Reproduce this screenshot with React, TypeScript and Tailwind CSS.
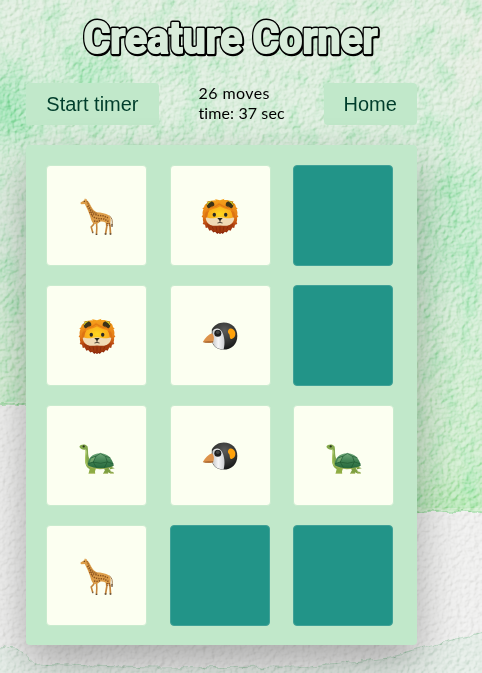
import React from "react";

type Creature = "giraffe" | "lion" | "penguin" | "turtle";

const cards: (Creature | null)[] = [
  "giraffe", "lion", null,
  "lion", "penguin", null,
  "turtle", "penguin", "turtle",
  "giraffe", null, null,
];

function Giraffe() {
  return (
    <svg viewBox="0 0 36 36" className="h-9 w-9 overflow-visible">
      <g fill="none" strokeLinecap="round">
        <path d="M15.5 24l-1 2.5-2.3 2.5 1.4 5M17.5 24l.3 6-.3 6" stroke="#c4843a" strokeWidth="1.6" />
        <path d="M27.5 23l.3 5.5-1.2 7.2M30 22l1 6 .5 7.6" stroke="#c4843a" strokeWidth="1.7" />
        <path d="M30.6 18c2.4 1.6 3.2 4.5 2.5 9" stroke="#8a5b28" strokeWidth=".8" />
        <path d="M33 26.5v2" stroke="#4c3421" strokeWidth="1.1" />
      </g>
      <path d="M1.6 4.6l3.6-2.4.8-2 .9 1.2.6-.6.5 1.6c2 .9 3 3.600 4.200 6 1.300 2.500 3.200 4.600 5.600 5.800 4.400.4 9 1 11.900 3 2.300 1.800 2.500 5.600 1.300 8-1 .9-2.600.7-3.700-.2-1.800-1.200-3.900-1.300-6.200-1.500-1.400 1.900-3.600 2.900-5.600 2.300-2.600-.8-3.300-4-4.400-7.500C10 14.300 7.600 9.500 5.800 5.900L2.500 6.200c-.8 0-1.300-.8-.9-1.600z" fill="#dc9d49" />
      <path d="M7.800 3.200c2 3 2.600 7 5.200 9.500 1.600 1.600 3.600 2.300 5.500 3" fill="none" stroke="#9d6427" strokeWidth="1.300" strokeDasharray="1.500 .6" />
      <path d="M8.500 8l2.500 4.200 3 3.600 5 1.700 5 .3 5 2M13 17.500l3 2.500 4.500.7 4.500.3 4.500 2.500M10.500 14l2.500 3M15 23l2.500.5 4-.8M28.300 25l.2 3M30 25l.7 3" fill="none" stroke="#8d541f" strokeWidth="1.500" strokeDasharray="1.400 1" />
      <circle cx="5.300" cy="3.300" r=".6" fill="#452b12" />
      <path d="M13.300 34.500h1M16.700 36.300h1.600M25.700 36h1.700M30.700 36h1.600" stroke="#58483b" strokeWidth="1.300" />
    </svg>
  );
}

function Lion() {
  return (
    <svg viewBox="0 0 36 36" className="h-9 w-9 overflow-visible">
      <defs>
        <linearGradient id="mane" x2="0" y2="1">
          <stop stopColor="#f7a31c" />
          <stop offset=".5" stopColor="#e47c18" />
          <stop offset=".7" stopColor="#bd4c12" />
          <stop offset="1" stopColor="#83200a" />
        </linearGradient>
        <radialGradient id="lionFace" cx=".5" cy=".45" r=".6">
          <stop stopColor="#ffd81f" />
          <stop offset="1" stopColor="#f99f1b" />
        </radialGradient>
      </defs>
      <path d="M7 4.500L4.300 3.300c3.500.2 6-1.400 10-1L12.500 1l5.500 1.200L22.500.8l-.7 1.300c3.500-.6 5.700.4 7.500 1.100l2.400-.2-1.200 1.600c2.300.9 3.300 2.500 3.500 4.700l1.700 1.100-1.200.9c1 2 1.200 4 .7 5.800l1.200 1.500-1.400 1.200c.3 1.500.1 3-.4 4.300l.7 2-2.300.7-.8 3.200-1.900-.4-1.700 3.100-1.800-.7-2.200 2.500-1.700-.7L20.700 36l-1-1-1.700 1-1.700-1-1 1-2.200-2.200-1.700.7-2.200-2.500-1.800.7-1.700-3.100-1.900.4-.8-3.200-2.300-.7.700-2C.9 22.800.7 21.300 1 19.800L-.4 18.600l1.200-1.500C.3 15.300.5 13.300 1.500 11.300l-1.200-.9L2 9.300C2.200 7.100 4 5.300 7 4.500z" fill="url(#mane)" />
      <ellipse cx="8.500" cy="7" rx="3.800" ry="3.700" fill="#3d3318" />
      <ellipse cx="27.500" cy="7" rx="3.800" ry="3.700" fill="#3d3318" />
      <path d="M4.900 7.500a3.800 3.800 0 0 1 4.600-4.100q-2.800 1-4.600 4.100zM31.100 7.500a3.800 3.800 0 0 0-4.600-4.100q2.800 1 4.600 4.100z" fill="#f4e321" />
      <path d="M18 7C10.500 7 5.200 12.500 5.200 18.500c0 5.500 5.600 9 12.800 9s12.800-3.500 12.800-9C30.800 12.500 25.500 7 18 7z" fill="url(#lionFace)" />
      <path d="M3.800 18.500c4.800 3.700 10.400.7 14.200.7s9.400 3 14.200-.7c.6 6.500-5 10.500-14.200 10.500S3.200 25 3.800 18.500z" fill="#f0dab5" />
      <path d="M2.800 20C2.500 13 6.500 9.500 13.500 6.500 9 8.500 6 13 5 19.500zM33.200 20c.3-7-3.700-10.500-10.700-13.500 4.500 2 7.500 6.500 8.500 13z" fill="#dc7313" />
      <path d="M4 14.500C6.500 9.500 12 8.800 17 4.500c4 3.700 11.500 3.500 15 10-4-4-9.500-3-14-6.300-4.500 3.200-10 2.300-14 6.300z" fill="#ef8c16" />
      <path d="M10 9.500q4-.5 7-3.500 5 3 9 4" fill="none" stroke="#d56e10" strokeWidth=".6" />
      <ellipse cx="12.300" cy="16.800" rx="1.700" ry="2" fill="#292826" />
      <ellipse cx="23.700" cy="16.800" rx="1.700" ry="2" fill="#292826" />
      <path d="M15.300 20h5.400L18 22.900z" fill="#20201e" />
      <path d="M18 22v2.300M15.500 25q2.500-1.100 5 0" fill="none" stroke="#40342a" strokeWidth=".9" />
      <path d="M4.500 25c5.500 4.300 9 2.500 13.500 2.500s8 1.800 13.500-2.500l-1.300 3.500-2.500 2-2.200 2-2.500 1.500-2.500-.5-2.500 1.500-2.500-1.500-2.500.5-2.500-1.500-2.200-2-2.500-2z" fill="#a03a0e" />
      <path d="M10 28.500l1.500 3M14 28.500l.8 4M18 28.500v5M22 28.500l-.8 4M26 28.500l-1.500 3" stroke="#7d200a" strokeWidth=".6" />
    </svg>
  );
}

function Penguin() {
  return (
    <svg viewBox="0 0 36 36" className="h-9 w-9">
      <defs>
        <radialGradient id="penguinHead" cx=".5" cy=".3" r=".7">
          <stop stopColor="#5c5c5b" />
          <stop offset=".55" stopColor="#363736" />
          <stop offset="1" stopColor="#171818" />
        </radialGradient>
        <linearGradient id="cheek">
          <stop stopColor="#c4c5c6" />
          <stop offset=".5" stopColor="#f5f5f6" />
          <stop offset="1" stopColor="#cecfd1" />
        </linearGradient>
      </defs>
      <path d="M9.800 11.500C12 7.300 16.500 4.500 21.800 4.500c8 0 13.500 5.500 13.500 13.400 0 8.300-5.800 13.700-14 13.700-6.300 0-10.300-3.600-11.500-8.900z" fill="url(#penguinHead)" />
      <path d="M10.500 13c3.500-4.200 7.900-2.400 9.500.8 2.400 4.500 3.400 11.400 1.600 17.600-5.600.3-10.300-3.200-11.500-8.200z" fill="url(#cheek)" />
      <path d="M.8 24c2.500-4.500 5.500-7.500 9.200-8.800 2.200 2.400 2.600 5.700.9 9.100-3.500.8-6.900.7-10.100-.3z" fill="#dd924b" />
      <path d="M.8 24c4-.9 6.500-.7 10.600-1.100l-.5 1.400c-3.800.9-7 .7-10.100-.3z" fill="#a7662f" />
      <circle cx="15.800" cy="15.200" r="3.500" fill="#1d1e1e" />
      <circle cx="15.800" cy="14.300" r="1.800" fill="#444544" />
      <path d="M26.400 12c1.500-2.700 5.500-1.700 6.700 2 .9 3.200-.5 6.200-3.500 6.900-2.500.3-1.200-3.600-2.600-5-1.200-1.200-1.400-2.400-.6-3.900z" fill="#ffa20b" />
    </svg>
  );
}

function Turtle() {
  return (
    <svg viewBox="0 -3 36 36" className="h-9 w-9 overflow-visible">
      <defs>
        <linearGradient id="turtleShell" x2="0" y2="1">
          <stop stopColor="#72aa7b" />
          <stop offset=".5" stopColor="#428354" />
          <stop offset="1" stopColor="#26683c" />
        </linearGradient>
      </defs>
      <path d="M30 25l5.800 2.200-5.900 1.300zM24 27l2 2-2 3.800h5.200l-.3-1.500 2.600 1.200h3.500l-.8-1.500-2.500-.5-1.200-3.500z" fill="#7d9f40" />
      <path d="M.4 5.700C1.300 3.200 6.700 2.400 8.600 5.600c1 4.400-.4 9.300 2.500 13.300l4 7.700-1.500 2.700c-4-.8-6.700-3.500-7.300-7.800-.4-4.700 1.800-8.500.7-12.700C4.300 8.700 1.200 8.200.4 5.700z" fill="#83a84b" />
      <path d="M6.800 9c1 5-2.300 10.500 1.800 16" fill="none" stroke="#a9c65e" strokeWidth="1.200" />
      <path d="M10.500 24l.2 4-1.200 4.800h6.700l-.2-2.500 1-3z" fill="#8dac43" />
      <path d="M8 24.600c4.700 4.700 18.500 4.400 25.600 1.200l-.6-3H9z" fill="#9bae55" />
      <path d="M8.800 24.200c-.2-7 4.500-12.100 12.600-12 7 .2 12.100 5.100 13.400 12.500-6.400 3.200-19.500 3.700-26-.5z" fill="url(#turtleShell)" />
      <path d="M11.500 17.200l5.500-2.100 4.500-2.700 5 3 4.800 1.200M17 15.100l-2.800 6-5.200 1.700M14.200 21.100l3.300 5.500M26.500 15.400l1.800 5.500-3 5.900M14.200 21.100l7.300 1.200 6.800-1.400 6.200 2" fill="none" stroke="#1d5630" strokeWidth=".65" />
      <path d="M12.500 17.300l3.700-1.400-2.200 4.500-3.300 1.200z" fill="#93bd80" opacity=".55" />
      <circle cx="4.700" cy="5.400" r="1.100" fill="#25301b" />
      <path d="M10 32.400h5.800M24.800 32.400H29M31 32.200h3.500" stroke="#c2ca82" strokeWidth=".8" />
    </svg>
  );
}

const drawings = { giraffe: Giraffe, lion: Lion, penguin: Penguin, turtle: Turtle };

function WatercolorPaper() {
  return (
    <svg className="pointer-events-none absolute inset-0 h-full w-full" viewBox="0 0 482 673" aria-hidden="true">
      <defs>
        <filter id="soft" x="-100%" y="-100%" width="300%" height="300%"><feGaussianBlur stdDeviation="18" /></filter>
        <filter id="torn" x="-5%" y="-5%" width="110%" height="110%">
          <feTurbulence type="fractalNoise" baseFrequency=".07" numOctaves="4" seed="8" />
          <feDisplacementMap in="SourceGraphic" scale="8" xChannelSelector="R" yChannelSelector="G" />
        </filter>
        <filter id="grain" x="0" y="0" width="100%" height="100%" colorInterpolationFilters="sRGB">
          <feTurbulence type="fractalNoise" baseFrequency=".22" numOctaves="2" seed="4" result="n" />
          <feColorMatrix in="n" values="0 0 0 0 0 0 0 0 0 0 0 0 0 0 0 1 0 0 0 0" result="height" />
          <feDiffuseLighting in="height" surfaceScale="2.6" lightingColor="#ffffff">
            <feDistantLight azimuth="220" elevation="45" />
          </feDiffuseLighting>
        </filter>
        <filter id="pigment" x="0" y="0" width="100%" height="100%" colorInterpolationFilters="sRGB">
          <feTurbulence type="fractalNoise" baseFrequency=".05 .035" numOctaves="4" seed="19" />
          <feColorMatrix values="0 0 0 0 .43 0 0 0 0 .86 0 0 0 0 .56 3.500 0 0 0 -1.600" />
        </filter>
        <linearGradient id="wash" x2="0" y2="1">
          <stop stopColor="#dcebdc" />
          <stop offset=".5" stopColor="#d1ebd5" />
          <stop offset="1" stopColor="#c8ebc6" />
        </linearGradient>
        <clipPath id="washArea"><path d="M0 0H482V508H422L300 460 27 402H0z" /></clipPath>
      </defs>
      <rect width="482" height="673" fill="#ececeb" />
      <path d="M-10 -10H492V511H422L300 460 30 404H-10z" fill="url(#wash)" stroke="#9bd9a0" strokeWidth="1.500" filter="url(#torn)" />
      <g clipPath="url(#washArea)">
        <g filter="url(#soft)">
          <ellipse cx="6" cy="105" rx="24" ry="32" fill="#85dda3" />
          <ellipse cx="90" cy="80" rx="20" ry="38" fill="#a5e5b8" />
          <ellipse cx="450" cy="230" rx="40" ry="60" fill="#bce8c6" />
          <ellipse cx="350" cy="25" rx="100" ry="22" fill="#dcebdb" />
          <ellipse cx="478" cy="50" rx="16" ry="75" fill="#e9ece2" />
          <ellipse cx="6" cy="230" rx="22" ry="45" fill="#d9eadb" />
          <ellipse cx="450" cy="510" rx="50" ry="14" fill="#9de29e" />
        </g>
        <rect width="482" height="520" filter="url(#pigment)" opacity=".25" />
      </g>
      <path d="M-10 647L18 649 36 664 150 668 300 667 390 658 421 649 451 640 495 631V690H-10z" fill="#dfe9e2" stroke="#b9d8c2" strokeWidth="1" filter="url(#torn)" />
      <rect width="482" height="673" filter="url(#grain)" className="mix-blend-soft-light" opacity=".75" />
    </svg>
  );
}

function Title() {
  return (
    <h1 className="h-[83px] w-full" aria-label="Creature Corner">
      <svg width="482" height="83" viewBox="0 0 482 83" style={{ fontFamily: 'Roboto, "Liberation Sans", sans-serif' }}>
        <defs>
          <text id="gameTitle" x="83.500" y="53" fontSize="45" fontWeight="700" textLength="294" lengthAdjust="spacingAndGlyphs">Creature Corner</text>
        </defs>
        <use href="#gameTitle" x=".8" y="1.400" fill="#000" stroke="#000" strokeWidth="4.600" strokeLinejoin="round" />
        <use href="#gameTitle" fill="#000" stroke="#000" strokeWidth="4.900" strokeLinejoin="round" />
        <use href="#gameTitle" fill="#d9ecdb" stroke="#d9ecdb" strokeWidth="2" strokeLinejoin="round" />
      </svg>
    </h1>
  );
}

export default function App() {
  return (
    <main className="relative isolate h-[673px] w-full overflow-hidden bg-[#dcebdc]">
      <WatercolorPaper />
      <div className="relative flex flex-col">
        <Title />
        <div className="ml-[26.3px] flex w-[390.6px] flex-col gap-5">
          <header className="flex h-[42px] items-center justify-between font-['Liberation_Sans',Arial,sans-serif]">
            <button className="h-full rounded bg-[#c1e8ca] px-5 text-xl text-[#003d2b]">Start timer</button>
            <div className="mb-[2px] w-[85px] font-[Lato,sans-serif] text-base leading-5 tracking-[0.1px] text-black">
              <p className="whitespace-nowrap tracking-[0.4px]">26 moves</p>
              <p className="whitespace-nowrap">time: 37 sec</p>
            </div>
            <button className="h-full rounded bg-[#c1e8ca] px-5 text-xl text-[#003d2b]">Home</button>
          </header>
          <section className="grid h-[500px] grid-cols-3 content-start gap-x-5 gap-y-[19px] rounded bg-[#c1e8ca] p-5 shadow-[0_19px_44px_rgba(0,0,0,0.3)]">
            {cards.map((creature, i) => {
              if (!creature) return <button key={i} aria-label="Hidden card" className="h-[101px] w-[100px] rounded border border-[#40a197] bg-[#229488]" />;
              const Drawing = drawings[creature];
              return (
                <div key={i} className="flex h-[101px] w-[101px] items-center justify-center rounded border border-[#c9ebce] bg-[#fcfff1] pt-px">
                  <Drawing />
                </div>
              );
            })}
          </section>
        </div>
      </div>
    </main>
  );
}
